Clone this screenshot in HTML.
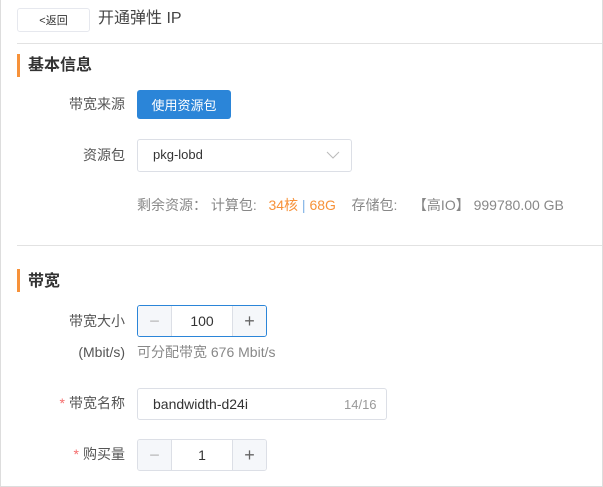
<!DOCTYPE html>
<html><head><meta charset="utf-8"><style>
*{box-sizing:border-box;margin:0;padding:0}
body{width:603px;height:487px;background:#fff;font-family:"Liberation Sans","Noto Sans CJK SC",sans-serif;color:#333;position:relative;overflow:hidden}
.frame{position:absolute;left:0;top:0;width:603px;height:487px;border:1px solid #ddd;border-top:none}
.a{position:absolute;white-space:nowrap}
.lbl{position:absolute;right:478px;font-size:14px;color:#555;line-height:16px}
.hr{position:absolute;left:17px;right:1px;height:1px;background:#e2e2e2}
.bar{position:absolute;left:17px;width:3px;height:23px;background:#f7923a}
.h{position:absolute;left:28px;font-size:16px;font-weight:bold;color:#333;line-height:20px}
.box{position:absolute;border:1px solid #dcdfe6;border-radius:3px;background:#fff}
.step{position:absolute;display:flex;border:1px solid #dcdfe6;border-radius:3px;overflow:hidden;height:32px;width:130px}
.step div{display:flex;align-items:center;justify-content:center;font-size:14px}
.step .s{width:33px;background:#f5f7fa;color:#bbb;font-size:18px;font-weight:300}
.step .m{flex:1;border-left:1px solid #dcdfe6;border-right:1px solid #dcdfe6;color:#333}
.star{color:#f56c6c;margin-right:4px}
</style></head><body>
<div class="frame"></div>
<div class="box" style="left:17px;top:8px;width:73px;height:24px;border-color:#e6e8ee;font-size:11px;color:#333;display:flex;align-items:center;justify-content:center">&lt;返回</div>
<div class="a" style="left:98px;top:9px;font-size:16px;line-height:20px;color:#444">开通弹性 IP</div>
<div class="hr" style="top:43px"></div>
<div class="bar" style="top:54px"></div>
<div class="h" style="top:56px">基本信息</div>
<div class="lbl" style="top:96px">带宽来源</div>
<div class="a" style="left:137px;top:90px;width:94px;height:29px;background:#2b85d8;border-radius:3px;color:#fff;font-size:13px;display:flex;align-items:center;justify-content:center">使用资源包</div>
<div class="lbl" style="top:147px">资源包</div>
<div class="box" style="left:137px;top:139px;width:215px;height:33px"></div>
<div class="a" style="left:153px;top:147px;font-size:13px;line-height:16px;color:#333">pkg-lobd</div>
<svg class="a" style="left:326px;top:150px" width="14" height="10"><path d="M1 2 L7 8 L13 2" fill="none" stroke="#bbb" stroke-width="1"/></svg>
<div class="a" style="left:137px;top:197px;font-size:14px;line-height:16px;color:#888">剩余资源： 计算包:&nbsp;&nbsp; <span style="color:#f7923a">34核</span> <span style="color:#7fb2e5">|</span> <span style="color:#f7923a">68G</span> &nbsp;&nbsp;&nbsp;存储包:&nbsp;&nbsp;&nbsp; 【高IO】 999780.00 GB</div>
<div class="hr" style="top:245px"></div>
<div class="bar" style="top:269px"></div>
<div class="h" style="top:272px">带宽</div>
<div class="lbl" style="top:313px">带宽大小</div>
<div class="step" style="left:137px;top:305px;border-color:#2b85d8"><div class="s">−</div><div class="m">100</div><div class="s" style="color:#666">+</div></div>
<div class="lbl" style="top:344px">(Mbit/s)</div>
<div class="a" style="left:137px;top:344px;font-size:14px;line-height:16px;color:#888">可分配带宽 676 Mbit/s</div>
<div class="lbl" style="top:395px"><span class="star">*</span>带宽名称</div>
<div class="box" style="left:137px;top:388px;width:250px;height:32px"></div>
<div class="a" style="left:153px;top:396px;font-size:14px;line-height:16px;color:#333">bandwidth-d24i</div>
<div class="a" style="left:344px;top:397px;font-size:13px;line-height:16px;color:#999">14/16</div>
<div class="lbl" style="top:446px"><span class="star">*</span>购买量</div>
<div class="step" style="left:137px;top:439px"><div class="s">−</div><div class="m">1</div><div class="s" style="color:#666">+</div></div>
</body></html>
